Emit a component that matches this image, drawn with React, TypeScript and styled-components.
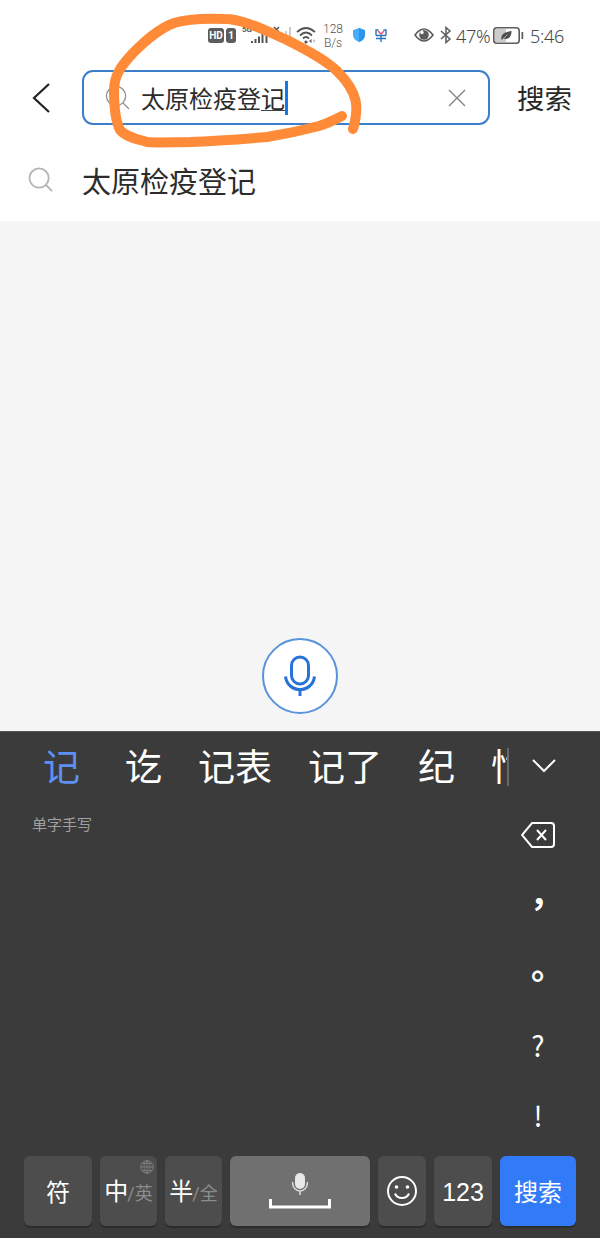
import React from 'react';
import styled, { createGlobalStyle } from 'styled-components';

const GlobalStyle = createGlobalStyle`
  * { box-sizing: border-box; }
  body { margin: 0; background: #3b3b3b; font-family: Roboto, "Noto Sans CJK SC", sans-serif; }
  svg { display: block; flex: none; }
`;

const Screen = styled.div`
  position: relative;
  width: 600px;
  height: 1238px;
  display: flex;
  flex-direction: column;
  background: #f5f5f5;
  overflow: hidden;
`;

const Header = styled.header`
  height: 221px;
  background: #fff;
`;

const StatusBar = styled.div`
  height: 70px;
  padding: 0 35px 0 208px;
  display: flex;
  align-items: center;
  color: #666;
`;

const Gap = styled.span<{ $w: number }>`
  flex: none;
  width: ${(p) => p.$w}px;
`;

const HdBadge = styled.span<{ $w: number }>`
  width: ${(p) => p.$w}px;
  height: 15px;
  border-radius: 3px;
  background: #5c5c5c;
  color: #fff;
  font: 700 10px/15px Roboto, sans-serif;
  text-align: center;
`;

const NetSpeed = styled.span`
  width: 20px;
  padding-top: 1px;
  font-size: 12px;
  font-weight: 300;
  line-height: 14px;
  display: flex;
  flex-direction: column;
  align-items: center;
  white-space: nowrap;
  color: #555;
`;

const StatusText = styled.span<{ $w: number }>`
  width: ${(p) => p.$w}px;
  padding-top: 1px;
  font: 300 18px/22px "Noto Sans", sans-serif;
  letter-spacing: -0.3px;
  white-space: nowrap;
  color: #484848;
`;

const SearchRow = styled.div`
  height: 55px;
  display: flex;
  align-items: center;
  padding-left: 32px;
`;

const SearchBox = styled.div`
  width: 408px;
  height: 55px;
  margin: 0 27px 0 32px;
  padding: 0 22px 0 21px;
  display: flex;
  align-items: center;
  border: 2px solid #3b7fcb;
  border-radius: 11px;
`;

const Query = styled.div`
  margin-left: 11px;
  padding-top: 4px;
  flex: 1;
  display: flex;
  align-items: center;
  font-size: 24px;
  line-height: 36px;
  color: #2c2c2c;
`;

const Composing = styled.span`
  height: 36px;
  background: linear-gradient(#444, #444) 0 28px / 24px 1px no-repeat;
`;

const Caret = styled.span`
  width: 3px;
  height: 34px;
  margin: -3px 0 0 0;
  background: #1677e8;
`;

const SearchAction = styled.span`
  padding-top: 4px;
  font-size: 27.5px;
  line-height: 40px;
  color: #282828;
`;

const Suggestion = styled.div`
  height: 96px;
  padding: 18px 0 0 28px;
  display: flex;
  gap: 29px;
  font-size: 29px;
  line-height: 80px;
  color: #2c2c2c;
  svg { margin-top: 24px; }
`;

const Results = styled.main`
  height: 510px;
  display: flex;
  flex-direction: column;
  align-items: center;
  justify-content: flex-end;
  padding-bottom: 17.5px;
`;

const VoiceButton = styled.button`
  width: 76px;
  height: 76px;
  padding: 0;
  display: grid;
  place-items: center;
  border: 2px solid #5a93da;
  border-radius: 50%;
  background: #fff;
`;

const Keyboard = styled.section`
  flex: 1;
  display: flex;
  flex-direction: column;
  background: #3b3b3b;
  border-top: 1px solid #555;
  color: #fff;
`;

const CandidateBar = styled.div`
  height: 70px;
  display: flex;
  align-items: center;
  padding-left: 43px;
`;

const Candidates = styled.div`
  width: 466px;
  height: 70px;
  padding-top: 2px;
  display: flex;
  gap: 36px;
  overflow: hidden;
  font-size: 37px;
  line-height: 70px;
  white-space: nowrap;
`;

const Candidate = styled.span<{ $active?: boolean }>`
  flex: none;
  margin-right: ${(p) => (p.$active ? 9 : 0)}px;
  color: ${(p) => (p.$active ? '#5b91f5' : '#fff')};
`;

const ClippedCandidate = styled.span`
  width: 16px;
  overflow: hidden;
`;

const FadeEdge = styled.span`
  width: 2px;
  height: 38px;
  margin: 0 23px 0 -2px;
  background: #686868;
`;

const Chevron = styled.svg`
  margin-bottom: 3px;
`;

const WritingArea = styled.div`
  flex: 1;
  display: flex;
  justify-content: space-between;
  padding: 0 24px 0 32px;
`;

const Mode = styled.span`
  margin-top: 12px;
  font-size: 15px;
  line-height: 22px;
  color: #a0a0a0;
`;

const SideKeys = styled.div`
  width: 76px;
  display: flex;
  flex-direction: column;
  align-items: center;
`;

const SideKey = styled.span<{ $size?: number; $top?: number; $left?: number; $bold?: boolean }>`
  height: 70.5px;
  display: flex;
  align-items: flex-start;
  padding-top: ${(p) => p.$top ?? 0}px;
  padding-left: ${(p) => p.$left ?? 0}px;
  font-family: "Noto Sans CJK SC", sans-serif;
  font-weight: ${(p) => (p.$bold ? 700 : 400)};
  font-size: ${(p) => p.$size ?? 28}px;
  line-height: 30px;
`;

const KeyRow = styled.div`
  height: 82px;
  display: flex;
  gap: 8px;
  padding: 0 24px 12px;
`;

const Key = styled.div<{ $w: number; $tone?: 'space' | 'primary' }>`
  position: relative;
  flex: none;
  width: ${(p) => p.$w}px;
  height: 70px;
  display: flex;
  flex-direction: column;
  align-items: center;
  justify-content: center;
  border-radius: 6px;
  background: ${(p) => (p.$tone === 'primary' ? '#327bf8' : p.$tone === 'space' ? '#707070' : '#4d4d4d')};
  box-shadow: 0 2px 1px #2c2c2c;
  font-size: 24px;
  line-height: 36px;
  white-space: nowrap;
`;

const KeyLabel = styled.span`
  padding-top: 3px;
`;

const DigitLabel = styled.span`
  padding-top: 2px;
  font-family: "Liberation Sans", sans-serif;
  font-size: 25px;
`;

const DualLabel = styled.span`
  display: flex;
  align-items: baseline;
  padding-top: 4px;
  small { margin-left: -1px; font-size: 18px; color: #8c8c8c; }
`;

const GlobeBadge = styled.span`
  position: absolute;
  top: 4px;
  right: 3px;
`;

const Markup = styled.svg`
  position: absolute;
  top: 0;
  left: 0;
  pointer-events: none;
`;

const Magnifier = ({ color, size, stroke }: { color: string; size: number; stroke: number }) => (
  <svg width={size} height={size} viewBox="0 0 26 26" fill="none" stroke={color} strokeWidth={stroke} strokeLinecap="round">
    <circle cx="11.5" cy="11.5" r="10" />
    <path d="M19 19l5.5 5.5" />
  </svg>
);

const SignalIcons = () => (
  <svg width="51" height="24" viewBox="0 0 51 24" fill="#555">
    <text x="0" y="9" fontSize="8" fontWeight="700" fontFamily="Roboto, sans-serif">5G</text>
    <path d="M9 18h2v2H9zM12.500 16h2v4h-2zM16 13.500h2V20h-2zM19.500 11h2v9h-2zM23.500 8h2v12h-2z" />
    <path d="M32 4l5 5M37 4l-5 5" stroke="#555" strokeWidth="1.500" />
    <path d="M43 8h2v8h-2zM47 4h2v12h-2z" fill="#ccc" />
  </svg>
);

const WifiIcon = () => (
  <svg width="20" height="20" viewBox="0 0 20 20" fill="none" stroke="#555" strokeWidth="1.800">
    <path d="M1 7Q10-1 19 7M4 10.500Q10 4.500 16 10.500M7 13.500Q10 10.500 13 13.500" />
    <circle cx="10" cy="17" r="1.600" fill="#555" stroke="none" />
    <path d="M13 16l2.500-2v4z" fill="#557" stroke="none" />
    <path d="M17 14l3 2-3 2z" fill="#ccc" stroke="none" />
  </svg>
);

const ShieldIcon = () => (
  <svg width="12" height="14" viewBox="0 0 12 14">
    <path d="M6 0l6 2.300V7q0 4.500-6 7Q0 11.500 0 7V2.300z" fill="#45aff9" />
    <path d="M6 0l6 2.300V7q0 4.500-6 7z" fill="#2d93ec" />
  </svg>
);

const YuanIcon = () => (
  <svg width="12" height="13" viewBox="0 0 12 13" fill="none" strokeWidth="1.400">
    <path d="M1 6.500V1h2.500M11 6.500V1H8.500M1 6.500h10M1 9.500h10M6 6v7" stroke="#2a74bd" />
    <path d="M3 2l3 3 3-3" stroke="#dc4a6b" />
  </svg>
);

const EyeIcon = () => (
  <svg width="20" height="14" viewBox="0 0 20 14">
    <path d="M1 7Q10-5 19 7 10 19 1 7z" fill="none" stroke="#5c5c5c" strokeWidth="1.600" />
    <circle cx="10" cy="7" r="4.800" fill="#5c5c5c" />
    <circle cx="8" cy="4.500" r="1.700" fill="#fff" />
  </svg>
);

const BluetoothIcon = () => (
  <svg width="12" height="18" viewBox="0 0 12 18" fill="none" stroke="#5c5c5c" strokeWidth="1.500">
    <path d="M1 5l9 8-4 3.500v-15L10 5l-9 8" />
  </svg>
);

const BatteryIcon = () => (
  <svg width="31" height="17" viewBox="0 0 31 17">
    <path d="M2 2h11v13H2z" fill="#ccc" />
    <rect x=".8" y=".8" width="25.400" height="15.400" rx="3" fill="none" stroke="#5c5c5c" strokeWidth="1.600" />
    <path d="M28.500 5h1.700v7h-1.700z" fill="#5c5c5c" />
    <path d="M8.500 13c-1-6 3-8 10-9 0 6-3 9-8 7.500z" fill="#505050" />
    <path d="M9 13l5.500-5.500" stroke="#bbb" strokeWidth=".8" />
  </svg>
);

export default function App() {
  return (
    <Screen>
      <GlobalStyle />
      <Header>
        <StatusBar>
          <HdBadge $w={16}>HD</HdBadge>
          <Gap $w={2} />
          <HdBadge $w={10}>1</HdBadge>
          <Gap $w={6} />
          <SignalIcons />
          <Gap $w={3} />
          <WifiIcon />
          <Gap $w={7} />
          <NetSpeed><span>128</span><span>B/s</span></NetSpeed>
          <Gap $w={10} />
          <ShieldIcon />
          <Gap $w={10} />
          <YuanIcon />
          <Gap $w={27} />
          <EyeIcon />
          <Gap $w={6} />
          <BluetoothIcon />
          <Gap $w={4} />
          <StatusText $w={37}>47%</StatusText>
          <BatteryIcon />
          <Gap $w={6} />
          <StatusText $w={35}>5:46</StatusText>
        </StatusBar>
        <SearchRow>
          <svg width="18" height="30" viewBox="0 0 18 30" fill="none" stroke="#222" strokeWidth="2.200">
            <path d="M17 1L2 15l15 14" />
          </svg>
          <SearchBox>
            <Magnifier color="#929292" size={25} stroke={1.4} />
            <Query>太原检疫登<Composing>记</Composing><Caret /></Query>
            <svg width="18" height="18" viewBox="0 0 18 18" stroke="#858585" strokeWidth="1.400">
              <path d="M1 1l16 16M17 1L1 17" />
            </svg>
          </SearchBox>
          <SearchAction>搜索</SearchAction>
        </SearchRow>
        <Suggestion>
          <Magnifier color="#b5b5b5" size={25} stroke={1.9} />
          太原检疫登记
        </Suggestion>
      </Header>

      <Results>
        <VoiceButton>
          <svg width="32" height="42" viewBox="0 0 32 42" fill="none" stroke="#2873da" strokeWidth="3">
            <rect x="7.500" y="2" width="17" height="27" rx="8.500" />
            <path d="M1.500 21.500c1 8 7 13 14.500 13s13.500-5 14.500-13M16 34.500V41" />
          </svg>
        </VoiceButton>
      </Results>

      <Keyboard>
        <CandidateBar>
          <Candidates>
            <Candidate $active>记</Candidate>
            <Candidate>讫</Candidate>
            <Candidate>记表</Candidate>
            <Candidate>记了</Candidate>
            <Candidate>纪</Candidate>
            <ClippedCandidate>忖</ClippedCandidate>
          </Candidates>
          <FadeEdge />
          <Chevron width="24" height="14" viewBox="0 0 24 14" fill="none" stroke="#fff" strokeWidth="2">
            <path d="M1 1l11 11L23 1" />
          </Chevron>
        </CandidateBar>
        <WritingArea>
          <Mode>单字手写</Mode>
          <SideKeys>
            <SideKey $top={20}>
              <svg width="34" height="26" viewBox="0 0 34 26" fill="none" stroke="#fff" strokeWidth="2">
                <path d="M11 1h19q3 0 3 3v18q0 3-3 3H11L1 13zM16 8l9 10M25 8l-9 10" />
              </svg>
            </SideKey>
            <SideKey $size={34} $top={4} $left={17} $bold>，</SideKey>
            <SideKey $size={34} $top={7} $left={20} $bold>。</SideKey>
            <SideKey $top={16}>?</SideKey>
            <SideKey $top={16}>!</SideKey>
          </SideKeys>
        </WritingArea>
        <KeyRow>
          <Key $w={68}><KeyLabel>符</KeyLabel></Key>
          <Key $w={57}>
            <GlobeBadge>
              <svg width="14" height="14" viewBox="0 0 14 14" fill="none" stroke="#7c7c7c">
                <circle cx="7" cy="7" r="6.300" />
                <ellipse cx="7" cy="7" rx="3" ry="6.300" />
                <path d="M1 7h12M2 3.500h10M2 10.500h10M7 1v12" />
              </svg>
            </GlobeBadge>
            <DualLabel>中<small>/英</small></DualLabel>
          </Key>
          <Key $w={57}><DualLabel>半<small>/全</small></DualLabel></Key>
          <Key $w={140} $tone="space">
            <svg width="62" height="36" viewBox="0 0 62 36" fill="none">
              <rect x="26" y="0" width="10" height="16" rx="5" fill="#e8e8e8" />
              <path d="M23.500 9c0 12 15 12 15 0M31 18v4" stroke="#ddd" strokeWidth="1.500" />
              <path d="M1.500 26v8h59v-8" stroke="#fff" strokeWidth="3" />
            </svg>
          </Key>
          <Key $w={48}>
            <svg width="30" height="30" viewBox="0 0 30 30" fill="none" stroke="#fff" strokeWidth="2">
              <circle cx="15" cy="15" r="14" />
              <path d="M8 17.500c2.500 6 11.500 6 14 0" />
              <circle cx="9.500" cy="11" r="1.800" fill="#fff" stroke="none" />
              <circle cx="20.500" cy="11" r="1.800" fill="#fff" stroke="none" />
            </svg>
          </Key>
          <Key $w={58}><DigitLabel>123</DigitLabel></Key>
          <Key $w={76} $tone="primary"><KeyLabel>搜索</KeyLabel></Key>
        </KeyRow>
      </Keyboard>

      <Markup width="400" height="160" viewBox="0 0 400 160" fill="none" stroke="#ff8b39" strokeWidth="10" strokeLinecap="round" strokeLinejoin="round">
        <path d="M353 129C359 108 359 93 337 71C323 58 304 49 287 40C264 30 243 19 225 19C204 18 187 19 174 23C158 29 145 41 133 53C121 66 114 75 114 91C114 108 115 120 120 130C126 137 137 139 147 142C160 143 174 142 190 142C218 141 243 139 267 137C286 134 304 130 319 126C329 123 336 119 342 116" />
      </Markup>
    </Screen>
  );
}
